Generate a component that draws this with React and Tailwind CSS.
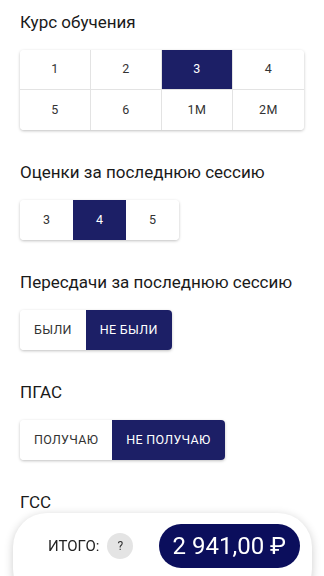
import React, { useState } from 'react';

const NAVY = 'bg-[#1c1f66] text-white';

function Title({ children }) {
  return <h2 className="text-[17px] leading-6 text-[#1a1a1a] mt-[30px] first:mt-0">{children}</h2>;
}

export default function App() {
  const [course, setCourse] = useState('3');
  const [grade, setGrade] = useState('4');
  const [retake, setRetake] = useState('no');
  const [pgas, setPgas] = useState('no');

  const courses = ['1', '2', '3', '4', '5', '6', '1М', '2М'];
  const btn = 'h-10 px-[14px] text-[12.5px] tracking-[0.025em]';

  return (
    <div className="min-h-[576px] bg-white" style={{ fontFamily: 'Roboto, "Noto Sans", sans-serif' }}>
      <div className="px-5 pt-2.5 pb-32">
        <Title>Курс обучения</Title>
        <div className="mt-4 grid grid-cols-4 rounded overflow-hidden shadow-[0_1px_3px_rgba(0,0,0,0.25)]">
          {courses.map((c, i) => (
            <button
              key={c}
              onClick={() => setCourse(c)}
              className={`h-10 text-[12.5px] tracking-[0.05em] border-[#e3e3e3] ${i % 4 !== 3 ? 'border-r' : ''} ${i < 4 ? 'border-b' : ''} ${
                course === c ? NAVY : 'bg-white text-[#333]'
              }`}
            >
              {c}
            </button>
          ))}
        </div>

        <Title>Оценки за последнюю сессию</Title>
        <div className="mt-4 flex w-fit rounded overflow-hidden shadow-[0_1px_3px_rgba(0,0,0,0.25)]">
          {['3', '4', '5'].map((g) => (
            <button
              key={g}
              onClick={() => setGrade(g)}
              className={`h-10 w-[53px] text-[12.5px] ${grade === g ? NAVY : 'bg-white text-[#333]'}`}
            >
              {g}
            </button>
          ))}
        </div>

        <Title>Пересдачи за последнюю сессию</Title>
        <div className="mt-4 flex w-fit rounded overflow-hidden shadow-[0_1px_3px_rgba(0,0,0,0.25)]">
          <button onClick={() => setRetake('yes')} className={`${btn} ${retake === 'yes' ? NAVY : 'bg-white text-[#333]'}`}>
            БЫЛИ
          </button>
          <button onClick={() => setRetake('no')} className={`${btn} ${retake === 'no' ? NAVY : 'bg-white text-[#333]'}`}>
            НЕ БЫЛИ
          </button>
        </div>

        <Title>ПГАС</Title>
        <div className="mt-4 flex w-fit rounded overflow-hidden shadow-[0_1px_3px_rgba(0,0,0,0.25)]">
          <button onClick={() => setPgas('yes')} className={`${btn} ${pgas === 'yes' ? NAVY : 'bg-white text-[#333]'}`}>
            ПОЛУЧАЮ
          </button>
          <button onClick={() => setPgas('no')} className={`${btn} ${pgas === 'no' ? NAVY : 'bg-white text-[#333]'}`}>
            НЕ ПОЛУЧАЮ
          </button>
        </div>

        <Title>ГСС</Title>
      </div>

      {/* total bar */}
      <div className="fixed left-[13px] right-[12px] top-[513px] h-[90px] bg-white rounded-[34px] shadow-[0_2px_10px_rgba(0,0,0,0.2)] flex items-start pt-[11px] pl-[35px] pr-3">
        <div className="flex items-center h-11 gap-2">
          <span className="text-[15px] text-[#222]">ИТОГО:</span>
          <span className="w-[26px] h-[26px] rounded-full bg-[#e4e4e4] text-[#333] text-[12px] flex items-center justify-center">?</span>
        </div>
        <div className="ml-auto h-11 px-[14px] rounded-full bg-[#0b0e5c] text-white text-[24px] flex items-center">
          2 941,00 ₽
        </div>
      </div>
    </div>
  );
}
